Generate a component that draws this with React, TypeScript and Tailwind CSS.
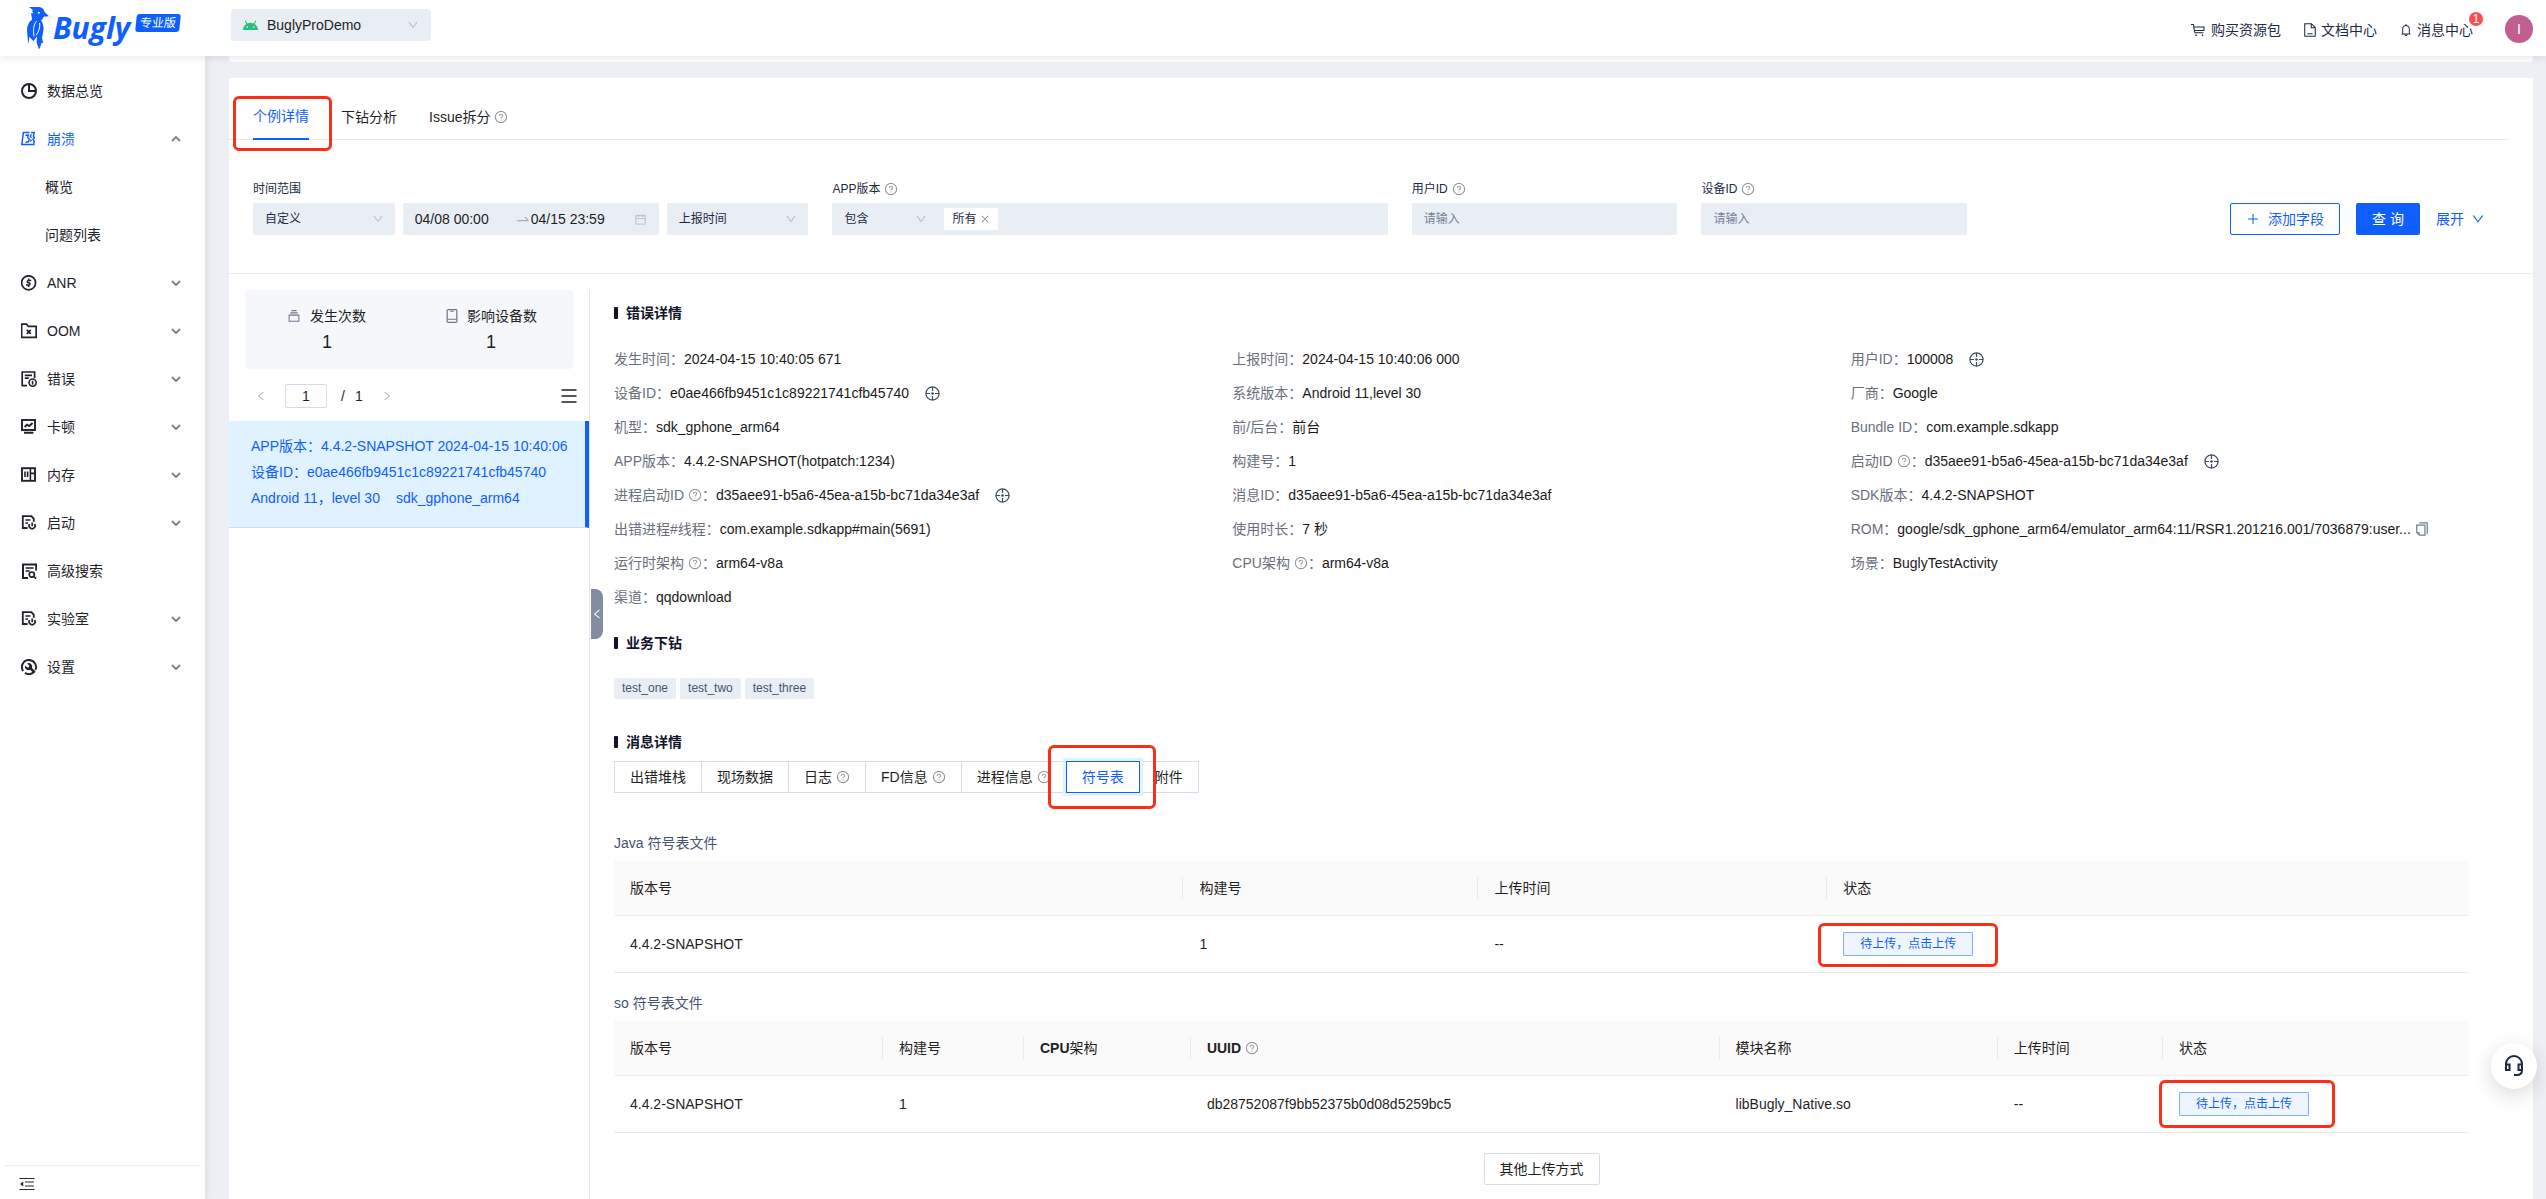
import React from 'react';
import {
  AiOutlineDown,
  AiOutlineLeft,
  AiOutlineRight,
  AiOutlineQuestionCircle,
  AiOutlineBell,
  AiOutlineCalendar,
  AiOutlineSwapRight,
  AiOutlinePlus,
  AiOutlineClose,
} from 'react-icons/ai';

type IconProps = { children: React.ReactNode; className?: string; size?: number };

const Icon: React.FC<IconProps> = ({ children, className = '', size = 16 }) => (
  <svg
    width={size}
    height={size}
    viewBox="0 0 16 16"
    fill="none"
    stroke="currentColor"
    strokeWidth="1.7"
    className={`shrink-0 ${className}`}
    aria-hidden="true"
  >
    {children}
  </svg>
);

const icons: Record<string, React.ReactNode> = {
  overview: (
    <>
      <circle cx="8" cy="8" r="7" strokeWidth="2" />
      <path d="M8 1v7h7" strokeWidth="2" />
    </>
  ),
  crash: (
    <>
      <path d="M8.6 1.4H2.4L.8 13.4h12l.4-3.4-1.2-1.6 1.4-1.6-1-1.6.8-3.8H10" strokeWidth="1.5" />
      <path d="M4.4 4.2l3-.2-.8 2.4 1.8 1.8-1 2.6-3 .4M10.4 3.4l-1 2 1 1.400M10.400 8.600l-1 2.200" strokeWidth="1.4" />
    </>
  ),
  anr: (
    <>
      <circle cx="7.6" cy="7.8" r="7" />
      <path d="M10.2 5.6H7a1.2 1.200 0 0 0 0 2.200h1.200a1.200 1.200 0 0 1 0 2.200H5M7.700 3.600v2M7.700 10v2" strokeWidth="1.5" />
    </>
  ),
  oom: (
    <>
      <path d="M.6 1.2h5l1.600 2.200h8v11H.6z" />
      <path d="M5.800 6.800l4 4M9.800 6.800l-4 4" strokeWidth="1.8" />
    </>
  ),
  error: (
    <>
      <path d="M6 14.6H1.200V1h12.400v6" />
      <path d="M3.800 4.400h7.200M3.800 7.200h4" />
      <circle cx="11.600" cy="11.600" r="3.600" strokeWidth="1.6" />
      <path d="M11.600 9.800v3.800" strokeWidth="1.6" />
    </>
  ),
  lag: (
    <>
      <rect x="1" y="1" width="13" height="10" strokeWidth="1.9" />
      <path d="M3.600 8l2.400-2.400 2.200 1.400L11.600 4M3 13.800h9.400" strokeWidth="1.9" />
    </>
  ),
  memory: (
    <>
      <rect x="1" y="1.2" width="13" height="12.6" strokeWidth="1.9" />
      <path d="M9.400 1.200v12.600M9.400 6.400h4.600M4 4.600v5.400M6.600 4.600v5.400" strokeWidth="1.600" />
    </>
  ),
  launch: (
    <>
      <path d="M6.600 13H1.800V1.200h8.600l2.400 2.600v3" strokeWidth="1.8" />
      <path d="M4.400 5h5M4.400 8h2.600" />
      <path d="M8.600 9a3 3 0 1 0 5 0M11.200 7.600v3.600" />
    </>
  ),
  search: (
    <>
      <path d="M7 15H2V1.400h13.200V7.400" strokeWidth="2" />
      <path d="M4.600 5h8M4.600 8h4" />
      <circle cx="10.800" cy="11.600" r="2.600" />
      <path d="M12.600 13.400l2.600 2.200" />
    </>
  ),
  settings: (
    <>
      <path d="M2.200 12A7 7 0 0 1 8 1a7 7 0 0 1 6.400 9.800M12.600 13.200A7 7 0 0 1 4 13.800" strokeWidth="1.9" />
      <path
        d="M6 4.400l2.200 2.200-.2 1.600-1.600.2L4.200 6.400a3.600 3.600 0 0 0 5 4.400l3.600 3.600 1.800-1.800-3.600-3.600A3.600 3.600 0 0 0 6 4.400z"
        fill="currentColor"
        stroke="none"
      />
    </>
  ),
};

const Help: React.FC = () => <AiOutlineQuestionCircle size={14} className="shrink-0 text-[#949494]" />;

const Locate: React.FC = () => (
  <button type="button" aria-label="定位" className="ml-4 text-[#3c4a66]">
    <Icon size={15}>
      <circle cx="8" cy="8" r="7" strokeWidth="1.3" />
      <path d="M8 1v4.400M8 10.600V15M1 8h4.400M10.600 8H15" strokeWidth="1.3" />
      <circle cx="8" cy="8" r="1.400" fill="currentColor" stroke="none" />
    </Icon>
  </button>
);

const Copy: React.FC = () => (
  <button type="button" aria-label="复制" className="ml-1 text-[#6f7c94]">
    <Icon size={14}>
      <path d="M5 1h9v12.400" strokeWidth="1.4" />
      <path d="M2 3.600h9.400V15H5l-3-3z" strokeWidth="1.4" />
      <path d="M2 12h3v3" strokeWidth="1" />
    </Icon>
  </button>
);

const menu = [
  { label: '数据总览', icon: 'overview' },
  { label: '崩溃', icon: 'crash', open: true, children: ['概览', '问题列表'] },
  { label: 'ANR', icon: 'anr', more: true },
  { label: 'OOM', icon: 'oom', more: true },
  { label: '错误', icon: 'error', more: true },
  { label: '卡顿', icon: 'lag', more: true },
  { label: '内存', icon: 'memory', more: true },
  { label: '启动', icon: 'launch', more: true },
  { label: '高级搜索', icon: 'search' },
  { label: '实验室', icon: 'launch', more: true },
  { label: '设置', icon: 'settings', more: true },
];

// row by row, three columns
const details = [
  { label: '发生时间', value: '2024-04-15 10:40:05 671' },
  { label: '上报时间', value: '2024-04-15 10:40:06 000' },
  { label: '用户ID', value: '100008', locate: true },
  { label: '设备ID', value: 'e0ae466fb9451c1c89221741cfb45740', locate: true },
  { label: '系统版本', value: 'Android 11,level 30' },
  { label: '厂商', value: 'Google' },
  { label: '机型', value: 'sdk_gphone_arm64' },
  { label: '前/后台', value: '前台' },
  { label: 'Bundle ID', value: 'com.example.sdkapp' },
  { label: 'APP版本', value: '4.4.2-SNAPSHOT(hotpatch:1234)' },
  { label: '构建号', value: '1' },
  { label: '启动ID', value: 'd35aee91-b5a6-45ea-a15b-bc71da34e3af', help: true, locate: true },
  { label: '进程启动ID', value: 'd35aee91-b5a6-45ea-a15b-bc71da34e3af', help: true, locate: true },
  { label: '消息ID', value: 'd35aee91-b5a6-45ea-a15b-bc71da34e3af' },
  { label: 'SDK版本', value: '4.4.2-SNAPSHOT' },
  { label: '出错进程#线程', value: 'com.example.sdkapp#main(5691)' },
  { label: '使用时长', value: '7 秒' },
  { label: 'ROM', value: 'google/sdk_gphone_arm64/emulator_arm64:11/RSR1.201216.001/7036879:user...', copy: true },
  { label: '运行时架构', value: 'arm64-v8a', help: true },
  { label: 'CPU架构', value: 'arm64-v8a', help: true },
  { label: '场景', value: 'BuglyTestActivity' },
  { label: '渠道', value: 'qqdownload' },
];

const messageTabs = [
  { label: '出错堆栈' },
  { label: '现场数据' },
  { label: '日志', help: true },
  { label: 'FD信息', help: true },
  { label: '进程信息', help: true },
  { label: '符号表', active: true },
  { label: '附件' },
];

const Logo: React.FC = () => (
  <a href="#" aria-label="Bugly 专业版" className="flex h-full items-center text-[#0f5fff]">
    <svg width="22" height="44" viewBox="0 0 22 44" fill="currentColor" aria-hidden="true">
      <path d="M2 1h10c3 0 5 2.200 5.600 5L22 10.200l-5.400.6c-.4 2-1.600 3.200-3.400 3.900H6.400c-1.200-.5-1.800-1.600-1.600-3L4 7.200h2.400L4.600 4.600h2L2 1z" />
      <path d="M5.600 13.200h7.600c2.600 3.200 3.800 7.200 3.200 11.400L15 32l1.200 5h-1.800l-.8 3-1.600 3.600-2.400-7.200.4-6.200-3.600 5L2.600 30.800 1.200 38 0 24.400c.2-4.600 1.800-9 5.600-11.200z" />
      <path d="M9.600 15c-3 3.600-3.600 9-2.600 15.400M12.600 17c.8 4-.6 8-3.400 12.200" fill="none" stroke="#fff" strokeWidth="1" />
      <circle cx="11.800" cy="6.800" r="1" fill="#fff" />
    </svg>
    <span className="ml-1 font-['Open_Sans',sans-serif] text-[30px] leading-9 font-bold italic">Bugly</span>
    <span className="mb-[10px] ml-[6px] h-[18px] -skew-x-6 rounded-[3px] bg-[#0f5fff] px-1 text-xs leading-[18px] text-white">
      专业版
    </span>
  </a>
);

const Header: React.FC = () => (
  <header className="relative z-20 flex h-14 shrink-0 items-center bg-white pr-[13px] pl-[27px] shadow-[0_1px_8px_rgba(0,21,41,0.12)]">
    <div className="w-[204px]">
      <Logo />
    </div>
    <div className="relative mb-[6px] text-[#1f1f1f]">
      <svg width="15" height="10" viewBox="0 0 15 10" className="absolute top-[11px] left-3" aria-hidden="true">
        <path d="M0 10a7.500 7.500 0 0 1 3.300-6L1.800 1l.8-.5L4.300 3.500a8 8 0 0 1 6.400 0L12.400.5l.8.500L11.700 4A7.500 7.500 0 0 1 15 10z" fill="#2bbf7d" />
        <circle cx="4.200" cy="7" r=".8" fill="#fff" />
        <circle cx="10.800" cy="7" r=".8" fill="#fff" />
      </svg>
      <select aria-label="应用" className="h-8 w-[200px] appearance-none rounded bg-[#e9eef5] pl-9 text-sm">
        <option>BuglyProDemo</option>
      </select>
      <AiOutlineDown size={12} className="pointer-events-none absolute top-[10px] right-3 text-[#b5b9c0]" />
    </div>
    <nav className="mt-1 ml-auto flex items-center text-sm text-[#1d2a44]">
      <a href="#" className="flex items-center gap-[6px]">
        <Icon size={14}>
          <path d="M0 1.600h2.600l1.800 9.600h9.800M3.200 4.600h11.600v4H4" strokeWidth="1.2" />
          <path d="M5 14h1.600M12.400 14H14" strokeWidth="1.6" />
        </Icon>
        购买资源包
      </a>
      <a href="#" className="ml-[22px] flex items-center gap-1">
        <Icon size={14}>
          <path d="M2 .8h7.600L14 5.200v10H2zM9.400 1v4.400H14M5 12.200h6" strokeWidth="1.2" />
        </Icon>
        文档中心
      </a>
      <a href="#" className="relative ml-[22px] flex items-center gap-1">
        <AiOutlineBell size={14} />
        消息中心
        <span className="absolute -top-2 -right-[10px] size-[14px] rounded-full bg-[#ff4d4f] text-center text-xs leading-[14px] text-white">
          1
        </span>
      </a>
    </nav>
    <button type="button" aria-label="账号" className="mt-px ml-8 size-7 rounded-full bg-[#c05f90] text-sm text-white">
      I
    </button>
  </header>
);

const Chevron: React.FC<{ up?: boolean }> = ({ up }) => (
  <svg width="10" height="6" viewBox="0 0 10 6" fill="none" stroke="#7d8698" strokeWidth="2" aria-hidden="true">
    <path d={up ? 'M1 5l4-4 4 4' : 'M1 1l4 4 4-4'} />
  </svg>
);

const Sidebar: React.FC = () => (
  <aside className="z-10 flex w-[205px] shrink-0 flex-col bg-white pt-[11px] text-sm text-[#1f2329] shadow-[2px_0_8px_rgba(29,35,41,0.08)]">
    <nav className="flex flex-col">
      {menu.map((item) => (
        <React.Fragment key={item.label}>
          <button
            type="button"
            className={`flex h-12 items-center pr-6 pl-[21px] ${item.open ? 'text-[#0f5fff]' : ''}`}
          >
            <Icon>{icons[item.icon]}</Icon>
            <span className="ml-[10px]">{item.label}</span>
            <span className="ml-auto">{(item.more || item.open) && <Chevron up={item.open} />}</span>
          </button>
          {item.children?.map((child) => (
            <a key={child} href="#" className="flex h-12 items-center pl-[45px]">
              {child}
            </a>
          ))}
        </React.Fragment>
      ))}
    </nav>
    <div className="mx-1 mt-auto border-t border-[#ebebeb] pt-[6px] pb-[3px] pl-[15px]">
      <button type="button" aria-label="收起菜单" className="block py-1">
        <Icon className="text-[#262626]">
          <path d="M.5 2.500h15M6 6h9M6 10h9M.5 13.500h15" strokeWidth="1.2" />
          <path d="M4.200 5.600v4.800L1 8z" fill="currentColor" stroke="none" />
        </Icon>
      </button>
    </div>
  </aside>
);

const SelectBox: React.FC<{ label: string; value: string; className: string }> = ({ label, value, className }) => (
  <div className={`relative ${className}`}>
    <select
      aria-label={label}
      className="h-8 w-full appearance-none rounded-xs bg-[#e9eef5] px-3 text-xs text-[#1d2a44]"
    >
      <option>{value}</option>
    </select>
    <AiOutlineDown size={12} className="pointer-events-none absolute top-[10px] right-[11px] text-[#b5b9c0]" />
  </div>
);

const FieldLabel: React.FC<{ htmlFor: string; help?: boolean; children: React.ReactNode }> = ({
  htmlFor,
  help,
  children,
}) => (
  <label htmlFor={htmlFor} className="mb-[3px] flex h-[22px] items-center gap-1 text-xs text-[#1d2a44]">
    {children}
    {help && <Help />}
  </label>
);

const Filters: React.FC = () => (
  <form className="flex items-end justify-between border-b border-[#ebebeb] pt-[38px] pr-12 pb-[38px] pl-6">
    <div className="grid w-[76.8%] grid-cols-6 gap-x-6">
      <div className="col-span-2">
        <FieldLabel htmlFor="start">时间范围</FieldLabel>
        <div className="flex gap-2">
          <SelectBox label="时间范围类型" value="自定义" className="flex-1" />
          <div className="flex h-8 w-[256px] items-center rounded-xs bg-[#e9eef5] px-3 text-sm text-[#1f1f1f]">
            <input id="start" aria-label="开始时间" defaultValue="04/08 00:00" className="w-[100px]" />
            <AiOutlineSwapRight size={16} className="shrink-0 text-[#a9adb5]" />
            <input aria-label="结束时间" defaultValue="04/15 23:59" className="min-w-0 flex-1" />
            <AiOutlineCalendar size={13} className="shrink-0 text-[#b5b9c0]" />
          </div>
          <SelectBox label="时间类型" value="上报时间" className="flex-1" />
        </div>
      </div>
      <div className="col-span-2">
        <FieldLabel htmlFor="version" help>
          APP版本
        </FieldLabel>
        <div className="flex h-8 items-center rounded-xs bg-[#e9eef5]">
          <SelectBox label="匹配方式" value="包含" className="w-[106px]" />
          <span className="ml-[6px] flex h-[22px] items-center gap-1 bg-white px-2 text-xs text-[#1d2a44]">
            所有
            <button type="button" aria-label="移除 所有">
              <AiOutlineClose size={10} className="text-[#8c8c8c]" />
            </button>
          </span>
          <input id="version" className="min-w-0 flex-1" />
        </div>
      </div>
      <div>
        <FieldLabel htmlFor="user" help>
          用户ID
        </FieldLabel>
        <input
          id="user"
          placeholder="请输入"
          className="h-8 w-full rounded-xs bg-[#e9eef5] px-3 text-xs placeholder:text-[#76829a]"
        />
      </div>
      <div>
        <FieldLabel htmlFor="device" help>
          设备ID
        </FieldLabel>
        <input
          id="device"
          placeholder="请输入"
          className="h-8 w-full rounded-xs bg-[#e9eef5] px-3 text-xs placeholder:text-[#76829a]"
        />
      </div>
    </div>
    <div className="flex shrink-0 items-center gap-4 text-sm text-[#0f5fff]">
      <button type="button" className="flex h-8 w-[110px] items-center justify-center gap-2 rounded-xs border border-[#0f5fff]">
        <AiOutlinePlus size={14} />
        添加字段
      </button>
      <button type="button" className="h-8 w-16 rounded-xs bg-[#0f5fff] text-white">
        查 询
      </button>
      <button type="button" className="flex items-center gap-[7px]">
        展开
        <AiOutlineDown size={14} />
      </button>
    </div>
  </form>
);

const Occurrences: React.FC = () => (
  <section className="mt-4 w-[361px] shrink-0 border-r border-[#e6e6e6] text-sm text-[#1f1f1f]">
    <div className="mx-4 grid h-[79px] grid-cols-2 rounded bg-[#f5f7fb] pt-4 text-center">
      <div>
        <div className="flex h-5 items-center justify-center gap-[10px]">
          <Icon size={12} className="text-[#6b7890]">
            <path d="M4.500.800h7M3 3.800h10M1.500 6.800h13V15h-13z" strokeWidth="1.4" />
          </Icon>
          发生次数
        </div>
        <div className="text-lg leading-8">1</div>
      </div>
      <div>
        <div className="flex h-5 items-center justify-center gap-2">
          <Icon size={14} className="text-[#6b7890]">
            <rect x="2.500" y=".8" width="11" height="14.400" rx="1" strokeWidth="1.4" />
            <path d="M2.500 11.800h11M6 2.600h4" strokeWidth="1.2" />
          </Icon>
          影响设备数
        </div>
        <div className="text-lg leading-8">1</div>
      </div>
    </div>
    <div className="flex h-[52px] items-center pt-[2px] pr-3 pl-[26px]">
      <button type="button" aria-label="上一页" className="text-[#b8b8b8]">
        <AiOutlineLeft size={12} />
      </button>
      <input
        aria-label="页码"
        defaultValue="1"
        className="ml-[18px] h-6 w-[42px] rounded-xs border border-[#d3dcea] text-center"
      />
      <span className="ml-[14px] flex gap-[10px]">
        <span>/</span>
        <span>1</span>
      </span>
      <button type="button" aria-label="下一页" className="ml-[18px] text-[#b8b8b8]">
        <AiOutlineRight size={12} />
      </button>
      <button type="button" aria-label="列表" className="ml-auto">
        <Icon size={16}>
          <path d="M.500 2h15M.500 8h15M.500 14h15" />
        </Icon>
      </button>
    </div>
    <a
      href="#"
      className="block border-r-4 border-b border-r-[#0f5fff] border-b-[#d5dbe5] bg-[#e0f1ff] pt-3 pb-4 pl-[22px] leading-[26px] whitespace-pre text-[#0f5fff]"
    >
      <div>APP版本：4.4.2-SNAPSHOT 2024-04-15 10:40:06</div>
      <div>设备ID：e0ae466fb9451c1c89221741cfb45740</div>
      <div>
        Android 11，level 30<span className="ml-4">sdk_gphone_arm64</span>
      </div>
    </a>
  </section>
);

const SectionTitle: React.FC<{ children: React.ReactNode }> = ({ children }) => (
  <h2 className="flex h-6 items-center gap-2 text-sm font-bold text-[#12142b]">
    <span className="h-3 w-1 rounded-[1px] bg-[#12142b]" />
    {children}
  </h2>
);

const Th: React.FC<{ width: string; last?: boolean; help?: boolean; children: React.ReactNode }> = ({
  width,
  last,
  help,
  children,
}) => (
  <th className={`h-[55px] border-b border-[#ebebeb] bg-[#fafafa] p-0 text-left font-normal ${width}`}>
    <span className={`flex h-[22px] items-center pl-4 ${last ? '' : 'border-r border-[#ebebeb]'}`}>
      {children}
      {help && (
        <span className="ml-1">
          <Help />
        </span>
      )}
    </span>
  </th>
);

const Td: React.FC<{ children?: React.ReactNode }> = ({ children }) => (
  <td className="h-[57px] border-b border-[#ebebeb] py-0 pr-0 pl-4">{children}</td>
);

const UploadButton: React.FC<{ mark: string }> = ({ mark }) => (
  <span className="relative block h-6 w-[130px]">
    <button type="button" className="h-6 w-full rounded-[1px] border border-[#80adff] bg-[#eef5ff] text-xs text-[#0f5fff]">
      待上传，点击上传
    </button>
    <span className={`pointer-events-none absolute rounded-md border-3 border-[#fc2d19] ${mark}`} />
  </span>
);

const SymbolTables: React.FC = () => (
  <div className="text-sm text-[#1f1f1f]">
    <h3 className="mt-10 flex h-5 items-center text-[#46536e]">Java 符号表文件</h3>
    <table className="mt-2 w-full table-fixed border-separate border-spacing-0">
      <thead>
        <tr>
          <Th width="w-[30.7%]">版本号</Th>
          <Th width="w-[15.9%]">构建号</Th>
          <Th width="w-[18.8%]">上传时间</Th>
          <Th width="w-[34.6%]" last>
            状态
          </Th>
        </tr>
      </thead>
      <tbody>
        <tr>
          <Td>4.4.2-SNAPSHOT</Td>
          <Td>1</Td>
          <Td>--</Td>
          <Td>
            <UploadButton mark="-top-[9px] -right-[25px] -bottom-[11px] -left-[25px]" />
          </Td>
        </tr>
      </tbody>
    </table>
    <h3 className="mt-5 flex h-5 items-center text-[#46536e]">so 符号表文件</h3>
    <table className="mt-2 w-full table-fixed border-separate border-spacing-0">
      <thead>
        <tr>
          <Th width="w-[14.5%]">版本号</Th>
          <Th width="w-[7.6%]">构建号</Th>
          <Th width="w-[9%]">
            <b>CPU</b>架构
          </Th>
          <Th width="w-[28.5%]" help>
            <b>UUID</b>
          </Th>
          <Th width="w-[15%]">模块名称</Th>
          <Th width="w-[8.9%]">上传时间</Th>
          <Th width="w-[16.5%]" last>
            状态
          </Th>
        </tr>
      </thead>
      <tbody>
        <tr>
          <Td>4.4.2-SNAPSHOT</Td>
          <Td>1</Td>
          <Td />
          <Td>db28752087f9bb52375b0d08d5259bc5</Td>
          <Td>libBugly_Native.so</Td>
          <Td>--</Td>
          <Td>
            <UploadButton mark="-top-3 -right-[26px] -bottom-3 -left-5" />
          </Td>
        </tr>
      </tbody>
    </table>
    <div className="mt-5 flex justify-center pb-3">
      <button type="button" className="h-8 rounded-xs border border-[#d3dcea] px-[15px]">
        其他上传方式
      </button>
    </div>
  </div>
);

const Detail: React.FC = () => (
  <section className="relative min-w-0 flex-1 pt-[27px] pr-16 pl-6">
    <button
      type="button"
      aria-label="收起列表"
      className="absolute top-[315px] left-px flex h-[50px] w-3 items-center justify-center rounded-r-lg bg-[#838ca0] text-white"
    >
      <AiOutlineLeft size={12} className="shrink-0" />
    </button>
    <SectionTitle>错误详情</SectionTitle>
    <dl className="mt-[17px] grid grid-cols-3 text-sm">
      {details.map((item) => (
        <div key={item.label} className="flex h-[34px] items-center whitespace-nowrap">
          <dt className="flex items-center text-[#6a6f7c]">
            {item.label}
            {item.help && (
              <span className="ml-1">
                <Help />
              </span>
            )}
            ：
          </dt>
          <dd className="flex items-center text-[#1a1a1a]">
            {item.value}
            {item.locate && <Locate />}
            {item.copy && <Copy />}
          </dd>
        </div>
      ))}
    </dl>
    <div className="mt-[17px]">
      <SectionTitle>业务下钻</SectionTitle>
    </div>
    <div className="mt-[23px] flex gap-1 text-xs text-[#46536e]">
      {['test_one', 'test_two', 'test_three'].map((tag) => (
        <span key={tag} className="h-[21px] rounded-xs bg-[#e9eef5] px-2 leading-5">
          {tag}
        </span>
      ))}
    </div>
    <div className="mt-[31px]">
      <SectionTitle>消息详情</SectionTitle>
    </div>
    <div className="mt-[7px] flex text-sm text-[#1f1f1f]">
      {messageTabs.map((tab) => (
        <div key={tab.label} className={`relative -ml-px first:ml-0 ${tab.active ? 'z-10' : ''}`}>
          <button
            type="button"
            className={`flex h-8 items-center gap-1 border px-[15px] ${
              tab.active ? 'border-[#0f5fff] bg-white text-[#0f5fff] ring-3 ring-[#e0f1ff]' : 'border-[#d3dcea]'
            }`}
          >
            {tab.label}
            {tab.help && <Help />}
          </button>
          {tab.active && (
            <span className="pointer-events-none absolute -top-4 -right-4 -bottom-4 -left-[18px] rounded-md border-3 border-[#fc2d19]" />
          )}
        </div>
      ))}
    </div>
    <SymbolTables />
  </section>
);

const App: React.FC = () => {
  return (
    <div className="flex min-h-screen flex-col bg-[#eeeff4] font-['Liberation_Sans','Noto_Sans_CJK_SC',sans-serif]">
      <Header />
      <div className="flex flex-1">
        <Sidebar />
        <main className="flex min-w-0 flex-1 flex-col pr-[13px] pl-6">
          <div className="h-[6px] rounded-b bg-white" />
          <div className="mt-4 flex flex-1 flex-col bg-white">
            <div className="mr-6 flex gap-8 border-b border-[#ebebeb] pt-4 pl-6 text-sm text-[#1f1f1f]">
              <div className="relative">
                <button type="button" className="-mb-px h-[46px] border-b-2 border-[#0f5fff] text-[#0f5fff]">
                  个例详情
                </button>
                <span className="pointer-events-none absolute top-[2px] -right-[23px] -bottom-[12px] -left-5 rounded-md border-3 border-[#fc2d19]" />
              </div>
              <button type="button">下钻分析</button>
              <button type="button" className="flex items-center gap-1">
                Issue拆分
                <Help />
              </button>
            </div>
            <Filters />
            <div className="flex flex-1">
              <Occurrences />
              <Detail />
            </div>
          </div>
        </main>
      </div>
      <button
        type="button"
        aria-label="联系客服"
        className="fixed right-[9px] bottom-[110px] z-20 flex size-[46px] items-center justify-center rounded-full bg-white text-[#1d2a44] shadow-[0_6px_20px_rgba(0,0,0,0.15)]"
      >
        <svg width="20" height="22" viewBox="0 0 20 22" fill="none" stroke="currentColor" strokeWidth="2" aria-hidden="true">
          <path d="M2 15V9a8 8 0 0 1 16 0v6c0 3-2 5-5 5h-3" />
          <path d="M2 9.500h3.500V15H2zM14.500 9.500H18V15h-3.500z" />
        </svg>
      </button>
    </div>
  );
};

export default App;
